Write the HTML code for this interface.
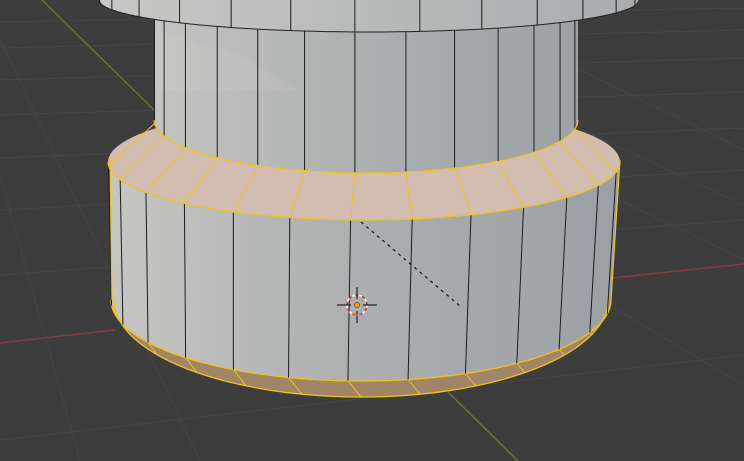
<!DOCTYPE html>
<html><head><meta charset="utf-8"><style>
html,body{margin:0;padding:0;background:#3d3d3d;overflow:hidden}
svg{display:block}
</style></head><body>
<svg id="s" width="744" height="461" viewBox="0 0 744 461" xmlns="http://www.w3.org/2000/svg">
<defs>
<linearGradient id="gl" x1="0" x2="1" y1="0" y2="0">
<stop offset="0" stop-color="#c6c6c3"/><stop offset="0.45" stop-color="#aeb0b1"/><stop offset="1" stop-color="#9ba0a4"/></linearGradient>
<linearGradient id="gm" x1="0" x2="1" y1="0" y2="0">
<stop offset="0" stop-color="#c4c4c2"/><stop offset="0.5" stop-color="#adafb0"/><stop offset="1" stop-color="#9ca1a5"/></linearGradient>
<linearGradient id="gt" x1="0" x2="1"><stop offset="0" stop-color="#c8c8c6"/><stop offset="1" stop-color="#a9acae"/></linearGradient>
</defs>
<g stroke="#464646" stroke-width="1" fill="none">
<line x1="0" y1="22" x2="744" y2="8"/><line x1="0" y1="48" x2="744" y2="30"/>
<line x1="0" y1="80" x2="744" y2="58"/><line x1="0" y1="115" x2="744" y2="92"/>
<line x1="0" y1="158" x2="744" y2="128"/><line x1="0" y1="210" x2="744" y2="170"/>
<line x1="0" y1="275" x2="744" y2="220"/><line x1="0" y1="440" x2="744" y2="355"/>
<line x1="0" y1="40" x2="200" y2="461"/><line x1="0" y1="175" x2="80" y2="461"/>
<line x1="560" y1="60" x2="744" y2="150"/><line x1="560" y1="120" x2="744" y2="205"/>
<line x1="600" y1="300" x2="744" y2="385"/><line x1="620" y1="200" x2="744" y2="260"/>
</g>
<line x1="0" y1="343" x2="115" y2="330" stroke="#8a3a44" stroke-width="1.5"/>
<line x1="612" y1="278" x2="744" y2="264" stroke="#8a3a44" stroke-width="1.5"/>
<line x1="42" y1="0" x2="156" y2="112" stroke="#5e7a2e" stroke-width="1.5"/>
<line x1="448" y1="392" x2="518" y2="461" stroke="#5e7a2e" stroke-width="1.5"/>
<g id="g"></g>
<circle cx="357" cy="305" r="10" fill="none" stroke="#fff" stroke-width="1.6" stroke-dasharray="4 3"/>
<circle cx="357" cy="305" r="10" fill="none" stroke="#e03030" stroke-width="1.6" stroke-dasharray="3 4" stroke-dashoffset="4"/>
<g stroke="#222" stroke-width="1.2"><line x1="337" y1="305" x2="351" y2="305"/><line x1="363" y1="305" x2="377" y2="305"/><line x1="357" y1="287" x2="357" y2="299"/><line x1="357" y1="311" x2="357" y2="323"/></g>
<circle cx="357" cy="305" r="2.6" fill="#ff9a1a" stroke="#553300" stroke-width="0.6"/>
<line x1="361" y1="222" x2="460" y2="306" stroke="#111" stroke-width="1.2" stroke-dasharray="3 4"/>
</svg>
<script>
(function(){
var g=document.getElementById('g'),NS='http://www.w3.org/2000/svg';
function el(t,a){var e=document.createElementNS(NS,t);for(var k in a)e.setAttribute(k,a[k]);g.appendChild(e);return e;}
function E(cx,cy,rx,ry,th){th=th*Math.PI/180;return [cx+rx*Math.sin(th),cy+ry*Math.cos(th)];}
function arc(cx,cy,rx,ry,a0,a1,n){var p=[];for(var i=0;i<=n;i++){p.push(E(cx,cy,rx,ry,a0+(a1-a0)*i/n));}return p;}
function pts(p){return p.map(function(q){return q[0].toFixed(1)+','+q[1].toFixed(1)}).join(' ');}
var step=13.85,off=-3;
var angs=[];for(var k=-8;k<=8;k++){var a=off+k*step;if(a>-89&&a<89)angs.push(a);}
var C=[361,300,247,97],L=[361,300,250,81],B=[364,162,256,58],A=[366,120,212,53];
var cPts=arc(C[0],C[1],C[2],C[3],-90,90,60);
el('polygon',{points:pts([[112,300]].concat(cPts.slice().reverse()).concat([[612,300]])),fill:'#a08567'});
var lb=arc(L[0],L[1],L[2],L[3],90,-90,60);
var tp=arc(B[0],B[1],B[2],B[3],-90,90,60);
el('polygon',{points:pts(tp.concat([[620,162],[611,300]]).concat(lb).concat([[112,300],[110,162]])),fill:'url(#gl)'});
angs.forEach(function(a){var p=E(L[0],L[1],L[2],L[3],a),q=E(C[0],C[1],C[2],C[3],a+3);el('line',{x1:p[0],y1:p[1],x2:q[0],y2:q[1],stroke:'#f2c21c','stroke-width':1});});
el('polyline',{points:pts(cPts),fill:'none',stroke:'#f2c21c','stroke-width':1.3});
el('polyline',{points:pts(lb),fill:'none',stroke:'#f2c21c','stroke-width':1.3});
angs.forEach(function(a){var p=E(B[0],B[1],B[2],B[3],a),q=E(L[0],L[1],L[2],L[3],a);el('line',{x1:p[0],y1:p[1],x2:q[0],y2:q[1],stroke:'#1c1c1c','stroke-width':1});});
el('ellipse',{cx:B[0],cy:B[1],rx:B[2],ry:B[3],fill:'#d2bdb0'});
var ab=arc(A[0],A[1],A[2],A[3],90,-90,60);
el('polygon',{points:pts([[154,0],[578,0]].concat(ab)),fill:'url(#gm)'});
el('polygon',{points:'154,30 240,55 300,90 154,90',fill:'#fff',opacity:'0.05'});
angs.forEach(function(a){var p=E(A[0],A[1],A[2],A[3],a),q=E(B[0],B[1],B[2],B[3],a);el('line',{x1:p[0],y1:p[1],x2:q[0],y2:q[1],stroke:'#f2c21c','stroke-width':1});
 el('line',{x1:p[0],y1:20,x2:p[0],y2:p[1],stroke:'#1c1c1c','stroke-width':1});});
el('polyline',{points:pts(arc(A[0],A[1],A[2],A[3],-90,90,60)),fill:'none',stroke:'#f2c21c','stroke-width':1.2});
el('polyline',{points:pts(tp),fill:'none',stroke:'#f2c21c','stroke-width':1.3});
el('line',{x1:110,y1:158,x2:112,y2:300,stroke:'#f2c21c','stroke-width':1.2});
el('line',{x1:620,y1:160,x2:611,y2:300,stroke:'#f2c21c','stroke-width':1.2});
var T=[369,0,270,32];
var tb=arc(T[0],T[1],T[2],T[3],90,-90,60);
el('polygon',{points:pts([[99,0],[639,0]].concat(tb)),fill:'url(#gt)'});
angs.forEach(function(a){var p=E(T[0],T[1],T[2],T[3],a);el('line',{x1:p[0],y1:0,x2:p[0],y2:p[1],stroke:'#1c1c1c','stroke-width':1});});
el('polyline',{points:pts(tb),fill:'none',stroke:'#222','stroke-width':1});
})();
</script>
</body></html>
